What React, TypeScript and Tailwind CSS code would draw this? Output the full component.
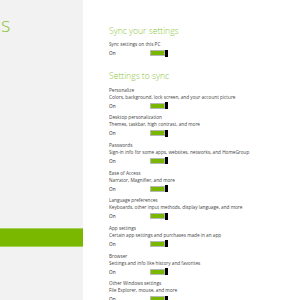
const items = [
  { title: 'Personalize', desc: 'Colors, background, lock screen, and your account picture' },
  { title: 'Desktop personalization', desc: 'Themes, taskbar, high contrast, and more' },
  { title: 'Passwords', desc: 'Sign-in info for some apps, websites, networks, and HomeGroup' },
  { title: 'Ease of Access', desc: 'Narrator, Magnifier, and more' },
  { title: 'Language preferences', desc: 'Keyboards, other input methods, display language, and more' },
  { title: 'App settings', desc: 'Certain app settings and purchases made in an app' },
  { title: 'Browser', desc: 'Settings and info like history and favorites' },
  { title: 'Other Windows settings', desc: 'File Explorer, mouse, and more' },
];

function Toggle() {
  return (
    <div className="flex items-center">
      <div className="h-[6px] w-[15px] border border-[#b8b8b8] bg-[#7ab800]" />
      <div className="h-[7px] w-[3px] bg-black" />
    </div>
  );
}

function OnRow() {
  return (
    <div className="flex h-[8px] items-center">
      <span className="w-[41px] text-[4.7px] font-medium leading-[8px] text-[#222]">On</span>
      <Toggle />
    </div>
  );
}

export default function App() {
  return (
    <div className="flex h-[300px] w-[300px] overflow-hidden bg-white font-['Open_Sans',sans-serif]">
      <aside className="flex w-[83px] shrink-0 flex-col bg-[#f2f2f2]">
        <div className="mt-[13px] pl-[1px] text-[20px] font-light leading-[24px] text-[#8cc63e]">s</div>
        <div className="mt-[191px] h-[19px] border-y border-[#a6d357] bg-[#7ab800]" />
      </aside>

      <main className="flex flex-1 flex-col pl-[26px] pt-[25px]">
        <h2 className="text-[8.6px] font-light leading-[12px] text-[#8cc63e]">Sync your settings</h2>
        <div className="mt-[3.5px] text-[4.7px] leading-[7px] text-[#444]">Sync settings on this PC</div>
        <div className="mt-[1.5px]">
          <OnRow />
        </div>

        <h2 className="mt-[13px] text-[8.6px] font-light leading-[12px] text-[#8cc63e]">Settings to sync</h2>
        <div className="mt-[4.5px] flex flex-col gap-[4.7px]">
          {items.map((item) => (
            <div key={item.title} className="flex flex-col">
              <div className="text-[4.7px] leading-[7px] text-[#444]">{item.title}</div>
              <div className="text-[4.7px] leading-[7px] text-[#444]">{item.desc}</div>
              <div className="mt-[1px]">
                <OnRow />
              </div>
            </div>
          ))}
        </div>
      </main>
    </div>
  );
}
